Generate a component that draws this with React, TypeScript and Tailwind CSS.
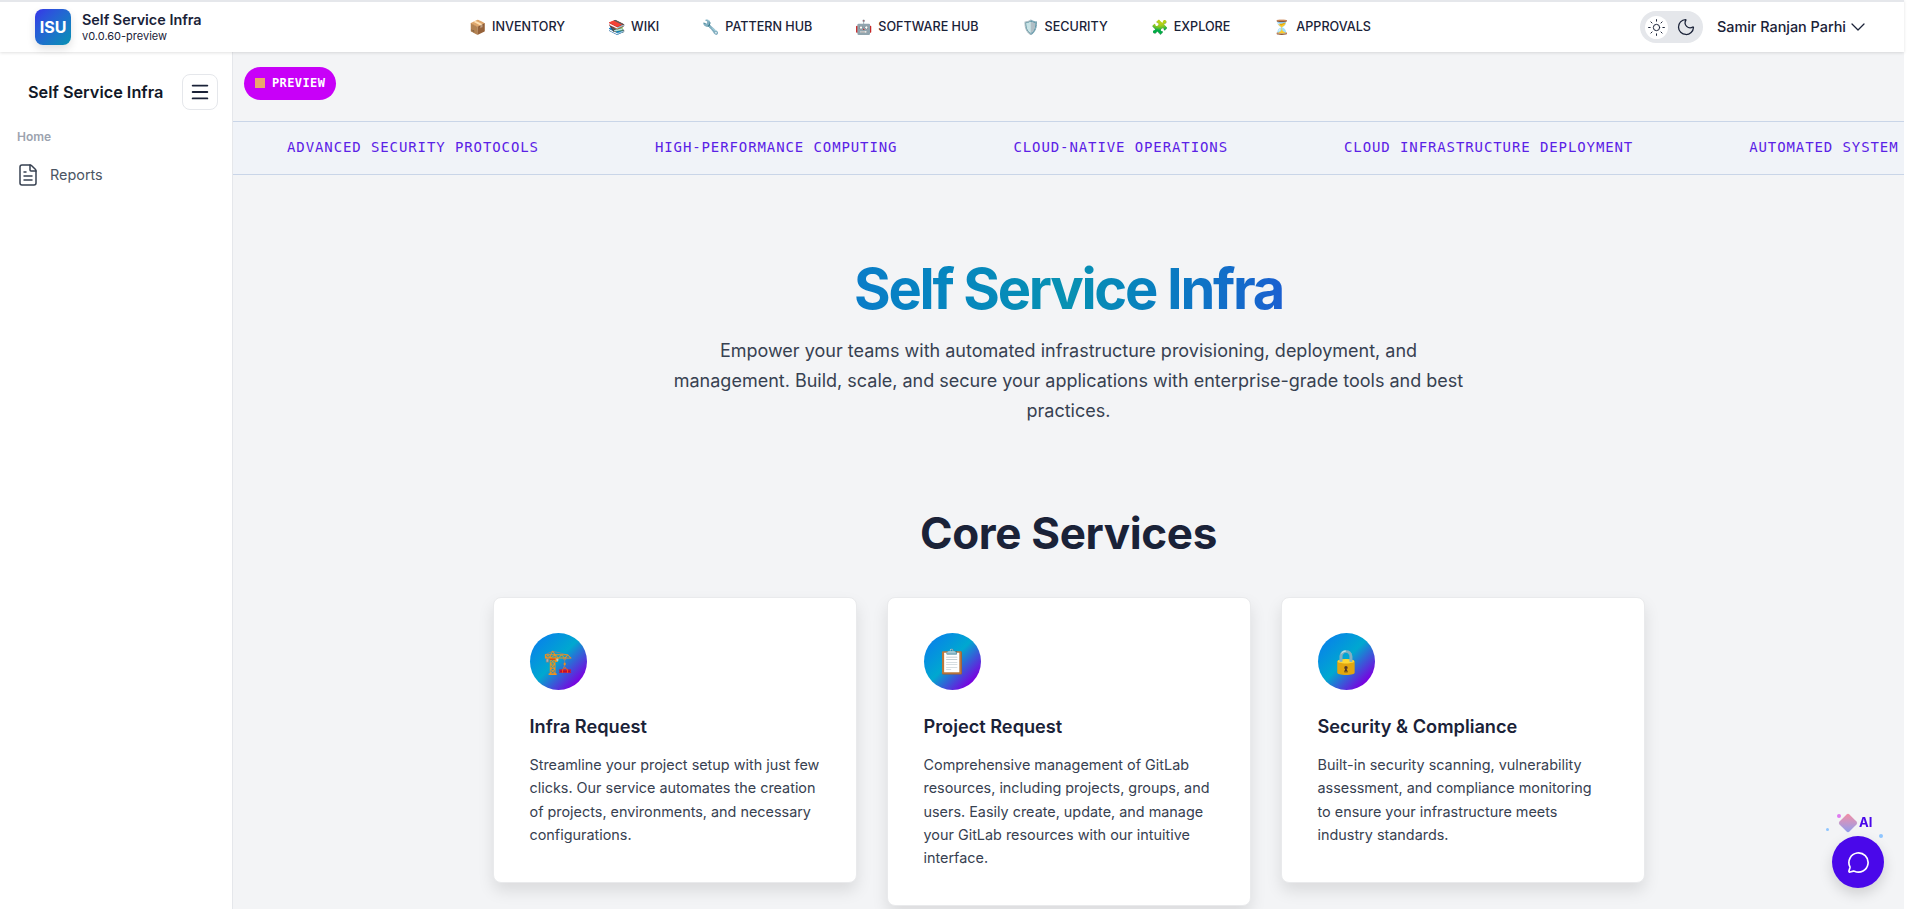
import { FileText, Menu, Sun, Moon, ChevronDown, MessageCircle } from 'lucide-react';

const navItems = [
  { icon: '📦', label: 'INVENTORY' },
  { icon: '📚', label: 'WIKI' },
  { icon: '🔧', label: 'PATTERN HUB' },
  { icon: '🤖', label: 'SOFTWARE HUB' },
  { icon: '🛡️', label: 'SECURITY' },
  { icon: '🧩', label: 'EXPLORE' },
  { icon: '⏳', label: 'APPROVALS' },
];

const tickerItems = [
  'ADVANCED SECURITY PROTOCOLS',
  'HIGH-PERFORMANCE COMPUTING',
  'CLOUD-NATIVE OPERATIONS',
  'CLOUD INFRASTRUCTURE DEPLOYMENT',
  'AUTOMATED SYSTEM MANAGEMENT',
];

const services = [
  {
    icon: '🏗️',
    title: 'Infra Request',
    text: 'Streamline your project setup with just few clicks. Our service automates the creation of projects, environments, and necessary configurations.',
  },
  {
    icon: '📋',
    title: 'Project Request',
    text: 'Comprehensive management of GitLab resources, including projects, groups, and users. Easily create, update, and manage your GitLab resources with our intuitive interface.',
  },
  {
    icon: '🔒',
    title: 'Security & Compliance',
    text: 'Built-in security scanning, vulnerability assessment, and compliance monitoring to ensure your infrastructure meets industry standards.',
  },
];

export default function App() {
  return (
    <div className="h-screen overflow-hidden flex bg-white font-['Inter',sans-serif] text-[#1a2238]">
      <div className="flex-1 min-w-0 flex flex-col bg-[#f3f4f6]">
        {/* Top bar */}
        <header className="relative z-10 h-[52px] shrink-0 flex items-center bg-white border-t-2 border-[#e5e7eb] shadow-[0_1px_3px_rgba(0,0,0,0.12)]">
          <div className="w-[469px] shrink-0 pl-[35px] flex items-center gap-[11px]">
            <div className="w-9 h-9 rounded-lg bg-gradient-to-br from-[#3730e8] to-[#0891b2] flex items-center justify-center text-white font-bold text-base shadow-[0_4px_8px_rgba(0,0,0,0.12)]">
              ISU
            </div>
            <div>
              <div className="text-[14.4px] font-semibold leading-[18px]">Self Service Infra</div>
              <div className="text-[11px] leading-[15px]">v0.0.60-preview</div>
            </div>
          </div>
          <nav className="flex items-center gap-[43px]">
            {navItems.map((item) => (
              <div key={item.label} className="flex items-center gap-2 text-[12.6px] font-medium whitespace-nowrap">
                <span className="text-sm w-[15px] leading-none">{item.icon}</span>
                {item.label}
              </div>
            ))}
          </nav>
          <div className="ml-auto flex items-center pr-[34px]">
            <div className="w-[63px] h-8 rounded-full bg-[#e5e7eb] flex items-center gap-[8px] px-[5px]">
              <span className="w-[23px] h-[23px] rounded-full bg-white flex items-center justify-center">
                <Sun size={19} strokeWidth={1.25} />
              </span>
              <Moon size={20} strokeWidth={1.5} />
            </div>
            <span className="ml-[14px] text-[14.4px] font-medium">Samir Ranjan Parhi</span>
            <ChevronDown size={24} strokeWidth={1.25} />
          </div>
        </header>

        <div className="flex flex-1 min-h-0">
          {/* Sidebar */}
          <aside className="w-[233px] shrink-0 bg-white border-r border-[#e5e7eb]">
            <div className="flex items-center pl-[28px] pt-[22px]">
              <span className="text-[16.3px] font-semibold text-[#111827] w-[154px] whitespace-nowrap">Self Service Infra</span>
              <button className="w-9 h-9 rounded-lg border border-[#e5e7eb] flex items-center justify-center">
                <Menu size={22} />
              </button>
            </div>
            <div className="pl-[17px] mt-[19px] text-xs font-semibold text-[#9ca3af]">Home</div>
            <div className="pl-[16px] mt-[18px] flex items-center gap-[10px] text-[14.4px] text-[#4b5563]">
              <FileText size={24} strokeWidth={1.5} className="text-[#374151]" />
              Reports
            </div>
          </aside>

          {/* Main */}
          <main className="flex-1 min-w-0">
            <div className="h-[69px] pt-[15px] pl-[11px]">
              <span className="inline-flex items-center gap-[7px] h-[33px] w-[92px] pl-[11px] pb-[1px] rounded-full bg-[#c800f8] text-white font-['DejaVu_Sans_Mono',monospace] text-[12px] font-bold whitespace-nowrap tracking-[0.4px]">
                <span className="w-[10px] h-[10px] shrink-0 bg-[#eba66c]" />
                PREVIEW
              </span>
            </div>

            <div className="h-[54px] pb-[2px] flex items-center gap-[116px] pl-[54px] overflow-hidden bg-[#f0f3f8] border-y border-[#c9d5e8] font-['DejaVu_Sans_Mono',monospace] text-sm tracking-[0.9px] text-[#5b21e6] whitespace-nowrap">
              {tickerItems.map((item) => (
                <span key={item}>{item}</span>
              ))}
            </div>

            <section className="pt-[80px] text-center">
              <h1 className="text-[56px] leading-[68px] font-bold tracking-[-2.3px] w-fit mx-auto bg-gradient-to-r from-[#0a7cc8] via-[#0891b2] to-[#1a5fd0] bg-clip-text text-transparent">
                Self Service Infra
              </h1>
              <p className="mt-[13px] w-[800px] mx-auto text-lg leading-[30px] text-[#374151]">
                Empower your teams with automated infrastructure provisioning, deployment, and management. Build, scale, and secure your applications with enterprise-grade tools and best practices.
              </p>
              <h2 className="mt-[79px] text-[44px] leading-[56px] font-bold tracking-[-0.37px]">Core Services</h2>
            </section>

            <div className="mt-[36px] w-[1152px] mx-auto grid grid-cols-3 gap-[30px] items-start">
              {services.map((service) => (
                <div key={service.title} className="bg-white rounded-lg border border-[#e9eaec] pt-[35px] px-[36px] pb-[36px] shadow-[0_8px_16px_rgba(0,0,0,0.1)]">
                  <div className="w-[57px] h-[57px] rounded-full bg-[linear-gradient(135deg,#0a78f0,#00a8d0_48%,#7a00e0_85%)] flex items-center justify-center text-2xl">
                    {service.icon}
                  </div>
                  <h3 className="mt-[22px] text-[18.2px] leading-[28px] font-semibold">{service.title}</h3>
                  <p className="mt-[13px] text-[14.4px] leading-[23.3px] text-[#374151]">{service.text}</p>
                </div>
              ))}
            </div>
          </main>
        </div>
      </div>
      <div className="w-[3px] shrink-0" />

      {/* Chat launcher */}
      <div className="fixed right-[23px] bottom-[21px] w-[52px] h-[52px] rounded-full bg-[#4a08ea] flex items-center justify-center shadow-[0_6px_14px_rgba(0,0,0,0.15)]">
        <MessageCircle size={23} strokeWidth={1.75} className="text-white" />
        <div className="absolute -top-[23px] left-[9px] flex items-center gap-[4px]">
          <span className="w-[14px] h-[14px] rotate-45 rounded-[2px] bg-gradient-to-br from-[#f58ba0] to-[#8a9cf0]" />
          <span className="text-[13px] font-bold text-[#4a08ea]">AI</span>
        </div>
        <span className="absolute -top-[22px] left-[5px] w-[4px] h-[4px] rounded-full bg-[#e07af0]" />
        <span className="absolute -top-[8px] -left-[6px] w-[3px] h-[3px] rounded-full bg-[#8ec5ff]" />
        <span className="absolute -top-[2px] right-[1px] w-[4px] h-[4px] rounded-full bg-[#8ec5ff]" />
      </div>
    </div>
  );
}
